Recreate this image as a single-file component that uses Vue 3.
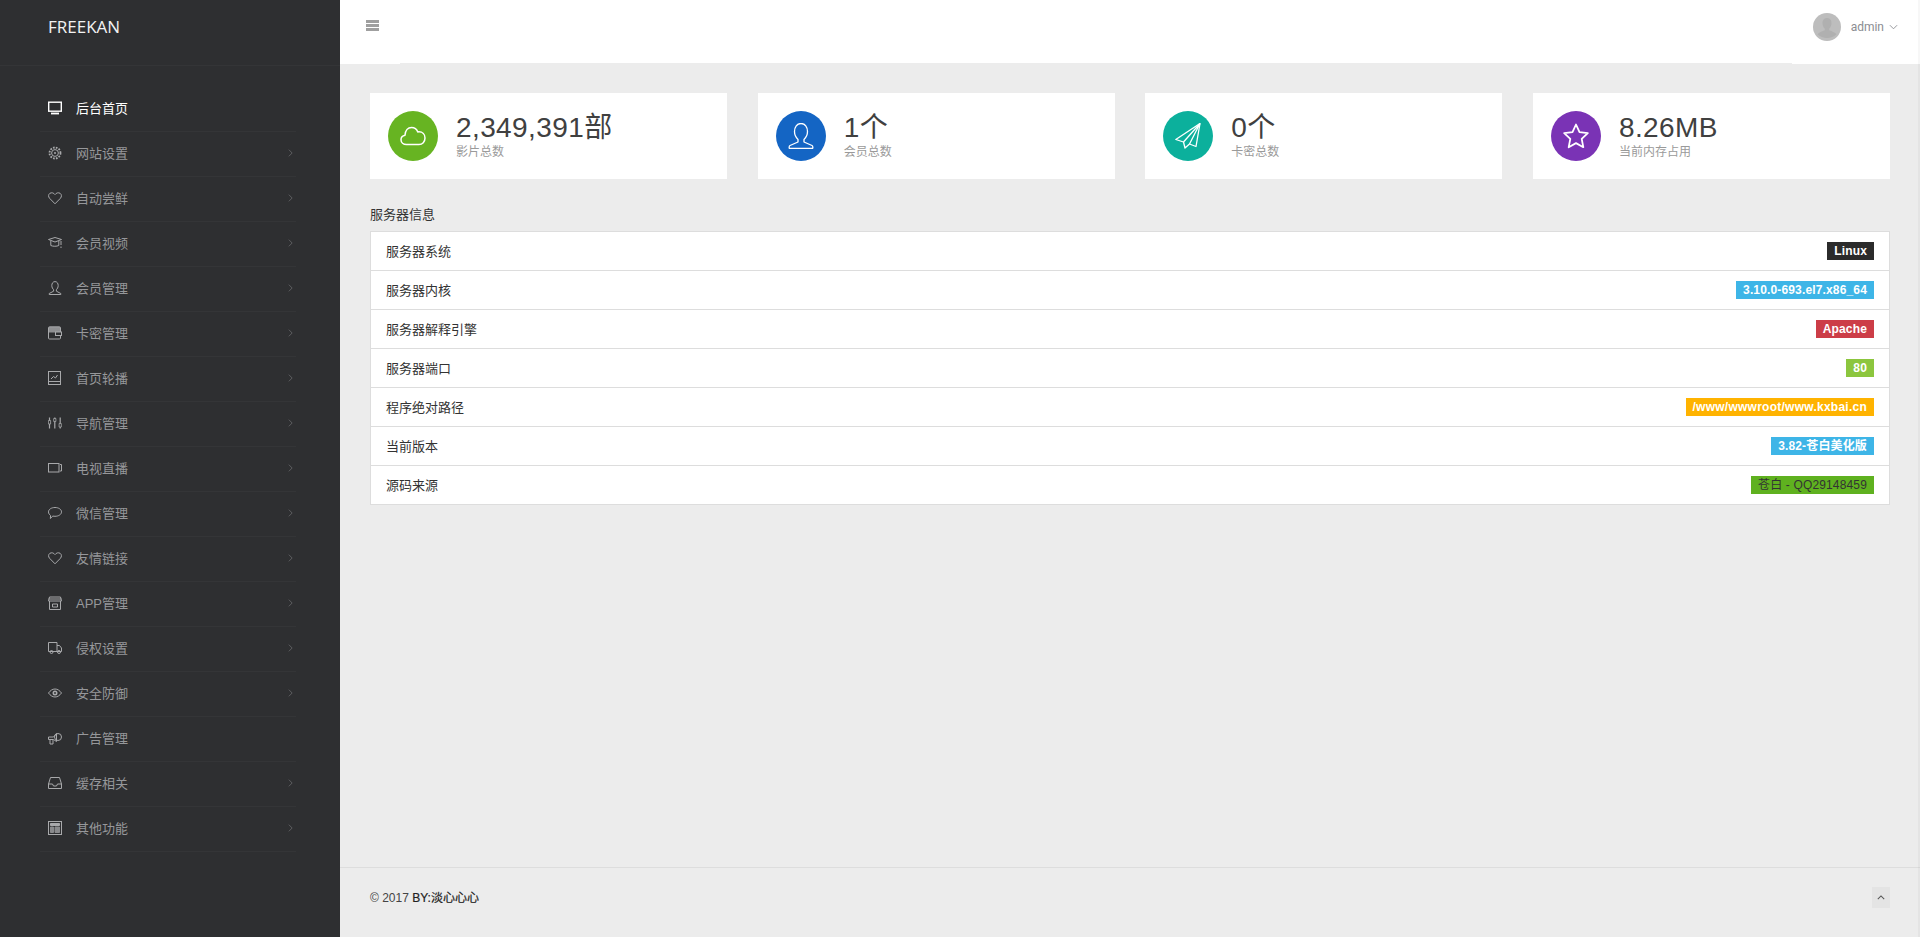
<script setup>
const menu = [
  { t: '后台首页', i: 'monitor', active: true, noArrow: true },
  { t: '网站设置', i: 'gear' },
  { t: '自动尝鲜', i: 'heart' },
  { t: '会员视频', i: 'cap' },
  { t: '会员管理', i: 'user' },
  { t: '卡密管理', i: 'wallet' },
  { t: '首页轮播', i: 'picture' },
  { t: '导航管理', i: 'sliders' },
  { t: '电视直播', i: 'video' },
  { t: '微信管理', i: 'chat' },
  { t: '友情链接', i: 'heart' },
  { t: 'APP管理', i: 'shop' },
  { t: '侵权设置', i: 'truck' },
  { t: '安全防御', i: 'eye' },
  { t: '广告管理', i: 'horn', noArrow: true },
  { t: '缓存相关', i: 'inbox' },
  { t: '其他功能', i: 'calc' },
]
const stats = [
  { v: '2,349,391部', l: '影片总数', c: '#67b422', i: 'cloud' },
  { v: '1个', l: '会员总数', c: '#1465c4', i: 'person' },
  { v: '0个', l: '卡密总数', c: '#0cb09c', i: 'plane' },
  { v: '8.26MB', l: '当前内存占用', c: '#7a33b5', i: 'star' },
]
const rows = [
  { k: '服务器系统', v: 'Linux', c: 'dark' },
  { k: '服务器内核', v: '3.10.0-693.el7.x86_64', c: 'blue' },
  { k: '服务器解释引擎', v: 'Apache', c: 'red' },
  { k: '服务器端口', v: '80', c: 'lime' },
  { k: '程序绝对路径', v: '/www/wwwroot/www.kxbai.cn', c: 'amber' },
  { k: '当前版本', v: '3.82-苍白美化版', c: 'blue' },
  { k: '源码来源', v: '苍白 - QQ29148459', c: 'green' },
]
</script>

<template>
  <div class="page">
    <aside class="side">
      <div class="brand"><span>FREEKAN</span></div>
      <ul class="menu">
        <li v-for="m in menu" :key="m.t" :class="['item', { active: m.active }]">
          <svg class="ico" viewBox="0 0 14 14" fill="none" stroke="currentColor" stroke-width="1">
            <template v-if="m.i === 'monitor'">
              <rect x="0.7" y="1.2" width="12.600" height="9" stroke-width="1.4" />
              <path d="M3 12.500h8" stroke-width="1.800" />
            </template>
            <template v-else-if="m.i === 'gear'">
              <circle cx="7" cy="7" r="5.500" stroke-dasharray="1.700 1.200" stroke-width="1.800" />
              <circle cx="7" cy="7" r="3.400" />
              <circle cx="7" cy="7" r="1" fill="currentColor" stroke="none" />
            </template>
            <path v-else-if="m.i === 'heart'" d="M7 12.800 1.600 7.300C.1 5.700.3 3.400 1.900 2.300c1.700-1 3.800-.5 5.100 1.300 1.300-1.800 3.400-2.300 5.100-1.300 1.600 1.100 1.800 3.400.3 5z" />
            <template v-else-if="m.i === 'cap'">
              <path d="M.5 3.500 7 1.500l6.500 2L7 6zM2.800 5v4.500c2 1 6 1 8 0V5" />
              <path d="M13 5v4M13 10.500v1.500" />
            </template>
            <path v-else-if="m.i === 'user'" d="M7 .6c2 0 3.200 1.700 3.200 4 0 1.800-1 3.300-1.800 4.100v1.500l4.400 2.300v1H1.200v-1l4.400-2.300V8.700C4.800 7.900 3.800 6.400 3.800 4.600c0-2.300 1.200-4 3.200-4z" />
            <template v-else-if="m.i === 'wallet'">
              <rect x=".5" y=".8" width="12" height="12.200" rx="1" />
              <path d="M1 1h11v5.500H1z" fill="currentColor" stroke="none" opacity=".8" />
              <rect x="7.500" y="6" width="6" height="3.500" fill="#2e2f31" />
            </template>
            <template v-else-if="m.i === 'picture'">
              <rect x=".5" y=".5" width="12" height="13" />
              <path d="M.5 10.500h12M3 8l2.500-2.500 2 1.500 2-3" />
            </template>
            <template v-else-if="m.i === 'sliders'">
              <path d="M1.500 1.500v11M6.800 1.500v11M12.200 1.500v11" stroke-width="1.200" />
              <path d="M.4 4.500h2.200v3.500H.4zM5.700 2.500h2.200v3H5.700zM11.100 7.500h2.200v3.500h-2.200z" stroke-width=".8" fill="#2e2f31" />
            </template>
            <template v-else-if="m.i === 'video'">
              <rect x=".5" y="2.500" width="10.500" height="8.500" />
              <path d="M12 3.500h1.500v6.500H12" />
            </template>
            <path v-else-if="m.i === 'chat'" d="M7 1.500c3.500 0 6.500 1.800 6.500 4.400S10.500 10.300 7 10.300c-.8 0-1.500-.1-2.200-.2L2.300 12.500l.3-3C1.300 8.600.5 7.400.5 5.900.5 3.300 3.500 1.500 7 1.500z" />
            <template v-else-if="m.i === 'shop'">
              <path d="M1.500 1h11l1 4h-13zM1.500 5v8.500h11V5M.5 3h13" />
              <path d="M4.500 8h5v3h-5z" />
            </template>
            <template v-else-if="m.i === 'truck'">
              <path d="M.5 1.500h8.500v9H.5zM9 4.500h2.500l2 2.500v3.500H9" />
              <circle cx="3.500" cy="11" r="1.500" />
              <circle cx="11" cy="11" r="1.500" />
            </template>
            <template v-else-if="m.i === 'eye'">
              <path d="M.5 7C2.300 4.500 4.500 3 7 3s4.700 1.500 6.500 4C11.700 9.500 9.500 11 7 11S2.300 9.500.5 7z" />
              <circle cx="7" cy="7" r="2.500" fill="currentColor" stroke="none" />
              <circle cx="7" cy="7" r=".9" fill="#2e2f31" stroke="none" />
            </template>
            <template v-else-if="m.i === 'horn'">
              <path d="M.5 6h5l3-3.500v8l-3-2h-5z" />
              <circle cx="10" cy="6" r="3.500" />
              <path d="M2 8.500v4.500h3V9" />
            </template>
            <template v-else-if="m.i === 'inbox'">
              <path d="M2.500 1.500h9l2 6.500v4.500H.5V8zM.5 8h4l1 2h3l1-2h4" />
            </template>
            <template v-else-if="m.i === 'calc'">
              <rect x=".5" y=".5" width="13" height="13" />
              <path d="M2.500 2.500h9v2h-9z" fill="currentColor" />
              <path d="M2.500 6h3v5.500h-3zM7 6h4.500v5.500H7z" fill="currentColor" opacity=".75" />
            </template>
          </svg>
          <span class="label">{{ m.t }}</span>
          <svg v-if="!m.noArrow" class="arrow" viewBox="0 0 6 10" fill="none" stroke="currentColor" stroke-width="1">
            <path d="M1 1l4 4-4 4" />
          </svg>
        </li>
      </ul>
    </aside>

    <div class="main">
      <header class="top">
        <div class="burger"><i></i><i></i><i></i></div>
        <div class="user">
          <svg class="avatar" viewBox="0 0 28 28">
            <circle cx="14" cy="14" r="14" fill="#bdbdbd" />
            <path d="M14 5c3 0 4.500 2.300 4.500 5 0 2.400-1 4.500-2.300 5.700v1.500c2.800 1.200 5.800 2 7.300 4A14 14 0 0 1 4.500 21.200c1.500-2 4.500-2.800 7.300-4v-1.500C10.500 14.500 9.500 12.400 9.500 10c0-2.700 1.500-5 4.500-5z" fill="#b0b0b0" />
          </svg>
          <span>admin</span>
          <svg class="caret" viewBox="0 0 10 6" fill="none" stroke="currentColor" stroke-width="1">
            <path d="M1 1l4 4 4-4" />
          </svg>
        </div>
      </header>

      <div class="body">
        <section class="cards">
          <div v-for="s in stats" :key="s.l" class="card">
            <div class="round" :style="{ background: s.c }">
              <svg viewBox="0 0 26 26" fill="none" stroke="#fff" stroke-width="1.300" stroke-linejoin="round">
                <path v-if="s.i === 'cloud'" d="M6.500 21.500C3.300 21.500 1 19.500 1 16.800c0-2.400 1.700-4.100 4-4.500C5.300 7.500 8 4.500 11.500 4.500c3 0 5.300 1.700 6.300 4.400.5-.1.900-.1 1.200-.1 3.400 0 6 2.600 6 6.300s-2.600 6.400-6 6.400z" stroke-width="1.500" />
                <path v-else-if="s.i === 'person'" d="M13 0.500c-4 0-6.500 3.500-6.500 8 0 3.500 1.500 6 3.500 8v2.500l-8 3.500c-1 .5-1 2.500-.5 3h23c.5-.5.500-2.500-.5-3l-8-3.500v-2.500c2-2 3.500-4.500 3.500-8 0-4.500-2.500-8-6.500-8z" />
                <template v-else-if="s.i === 'plane'">
                  <path d="M25 .5 .8 16.500l7.700 2.500 1.500 6 4.500-4 6.500 2.500z" />
                  <path d="M25 .5 8.500 19M25 .5 14.500 21" />
                </template>
                <path v-else d="M13 1.500l3.500 7.700 8.300 1-6.100 5.700 1.600 8.300-7.300-4.100-7.300 4.100 1.600-8.300L1.200 10.200l8.300-1z" stroke-width="1.800" />
              </svg>
            </div>
            <div class="nums">
              <div class="val">{{ s.v }}</div>
              <div class="lab">{{ s.l }}</div>
            </div>
          </div>
        </section>

        <h5 class="title">服务器信息</h5>
        <ul class="list">
          <li v-for="r in rows" :key="r.k" class="row">
            <span class="key">{{ r.k }}</span>
            <b :class="['tag', r.c]">{{ r.v }}</b>
          </li>
        </ul>
      </div>

      <footer class="foot">
        <span class="copy">© 2017 <span class="by">BY:淡心心心</span></span>
        <div class="up">
          <svg viewBox="0 0 10 6" fill="none" stroke="currentColor" stroke-width="1.300"><path d="M1 5l4-4 4 4" /></svg>
        </div>
      </footer>
    </div>
  </div>
</template>

<style>
html, body { margin: 0; background: #ececec; }
</style>

<style scoped>
* { box-sizing: border-box; }
.page {
  position: relative;
  display: flex;
  height: 937px;
  overflow: hidden;
  font-family: "Liberation Sans", "Noto Sans CJK SC", sans-serif;
  font-size: 13px;
  color: #333;
}
.page::after {
  content: "";
  position: absolute;
  top: 0;
  right: 0;
  bottom: 0;
  width: 2px;
  background: rgba(0, 0, 0, .03);
}
.side { width: 340px; flex: none; background: #2e2f31; }
.brand {
  height: 66px;
  padding: 16px 0 0 48px;
  border-bottom: 1px solid #343537;
  color: #f2f2f2;
  font-family: "Open Sans", sans-serif;
  font-size: 17px;
  line-height: 22px;
}
.menu { list-style: none; margin: 21px 0 0; padding: 0 44px 0 40px; }
.item {
  display: flex;
  align-items: center;
  height: 45px;
  padding: 0 3px 3px 8px;
  border-bottom: 1px solid #343537;
  color: #96979a;
}
.item.active { color: #fff; }
.ico { width: 14px; height: 14px; flex: none; color: #a8a9ab; }
.item.active .ico { color: #fff; }
.label { margin-left: 14px; flex: 1; }
.arrow { width: 5px; height: 10px; color: #66676a; flex: none; }
.main { flex: 1; min-width: 0; display: flex; flex-direction: column; }
.top {
  position: relative;
  height: 64px;
  flex: none;
  background: #fff;
  display: flex;
  align-items: flex-start;
  justify-content: space-between;
  padding: 20px 22px 0 26px;
}
.top::after {
  content: "";
  position: absolute;
  left: 60px;
  right: 128px;
  bottom: 0;
  height: 1px;
  background: #ececec;
}
.burger { width: 13px; display: flex; flex-direction: column; gap: 1px; }
.burger i { display: block; height: 3px; background: #9f9f9f; }
.user { display: flex; align-items: center; color: #8b8d92; font-family: Roboto, sans-serif; font-size: 12px; margin-top: -7px; }
.avatar { width: 28px; height: 28px; margin-right: 10px; }
.caret { width: 9px; height: 6px; margin-left: 5px; }
.body { flex: 1; padding: 29px 30px 0; min-height: 0; }
.cards { display: grid; grid-template-columns: repeat(4, 357px); justify-content: space-between; }
.card {
  height: 86px;
  background: #fff;
  display: flex;
  align-items: center;
  padding-left: 18px;
}
.round {
  width: 50px;
  height: 50px;
  border-radius: 50%;
  display: flex;
  align-items: center;
  justify-content: center;
  flex: none;
}
.round svg { width: 26px; height: 26px; }
.nums { margin-left: 18px; }
.val { font-size: 28px; line-height: 32px; color: #404040; letter-spacing: .4px; margin-top: -1px; }
.lab { font-size: 12px; line-height: 14px; color: #9a9a9a; margin-top: 1px; }
.title { margin: 26px 0 6px; font-size: 13px; line-height: 20px; font-weight: 400; color: #333; }
.list { list-style: none; margin: 0; padding: 0; background: #fff; border: 1px solid #ddd; width: 1520px; }
.row {
  height: 39px;
  display: flex;
  align-items: center;
  justify-content: space-between;
  padding: 0 15px;
  border-bottom: 1px solid #ddd;
}
.row:last-child { border-bottom: 0; height: 38px; }
.key { margin-bottom: 2px; }
.tag { font-size: 12px; line-height: 18px; color: #fff; padding: 0 7px; letter-spacing: .15px; }
.dark { background: #2b2b2b; }
.blue { background: #3eb5e7; }
.red { background: #cc3d47; }
.lime { background: #8cc63e; }
.amber { background: #ffb300; letter-spacing: .25px; }
.green { background: #5fb11f; color: #333; font-weight: 400; }
.foot {
  height: 70px;
  flex: none;
  border-top: 1px solid #dddddd;
  padding: 0 30px 10px;
  display: flex;
  align-items: center;
  justify-content: space-between;
  font-size: 12px;
  color: #444;
}
.copy { margin-bottom: 3px; }
.by { color: #222; -webkit-text-stroke: .2px #222; }
.up {
  width: 18px;
  height: 21px;
  background: #e4e4e4;
  color: #555;
  display: flex;
  align-items: center;
  justify-content: center;
}
.up svg { width: 8px; height: 5px; }
</style>
